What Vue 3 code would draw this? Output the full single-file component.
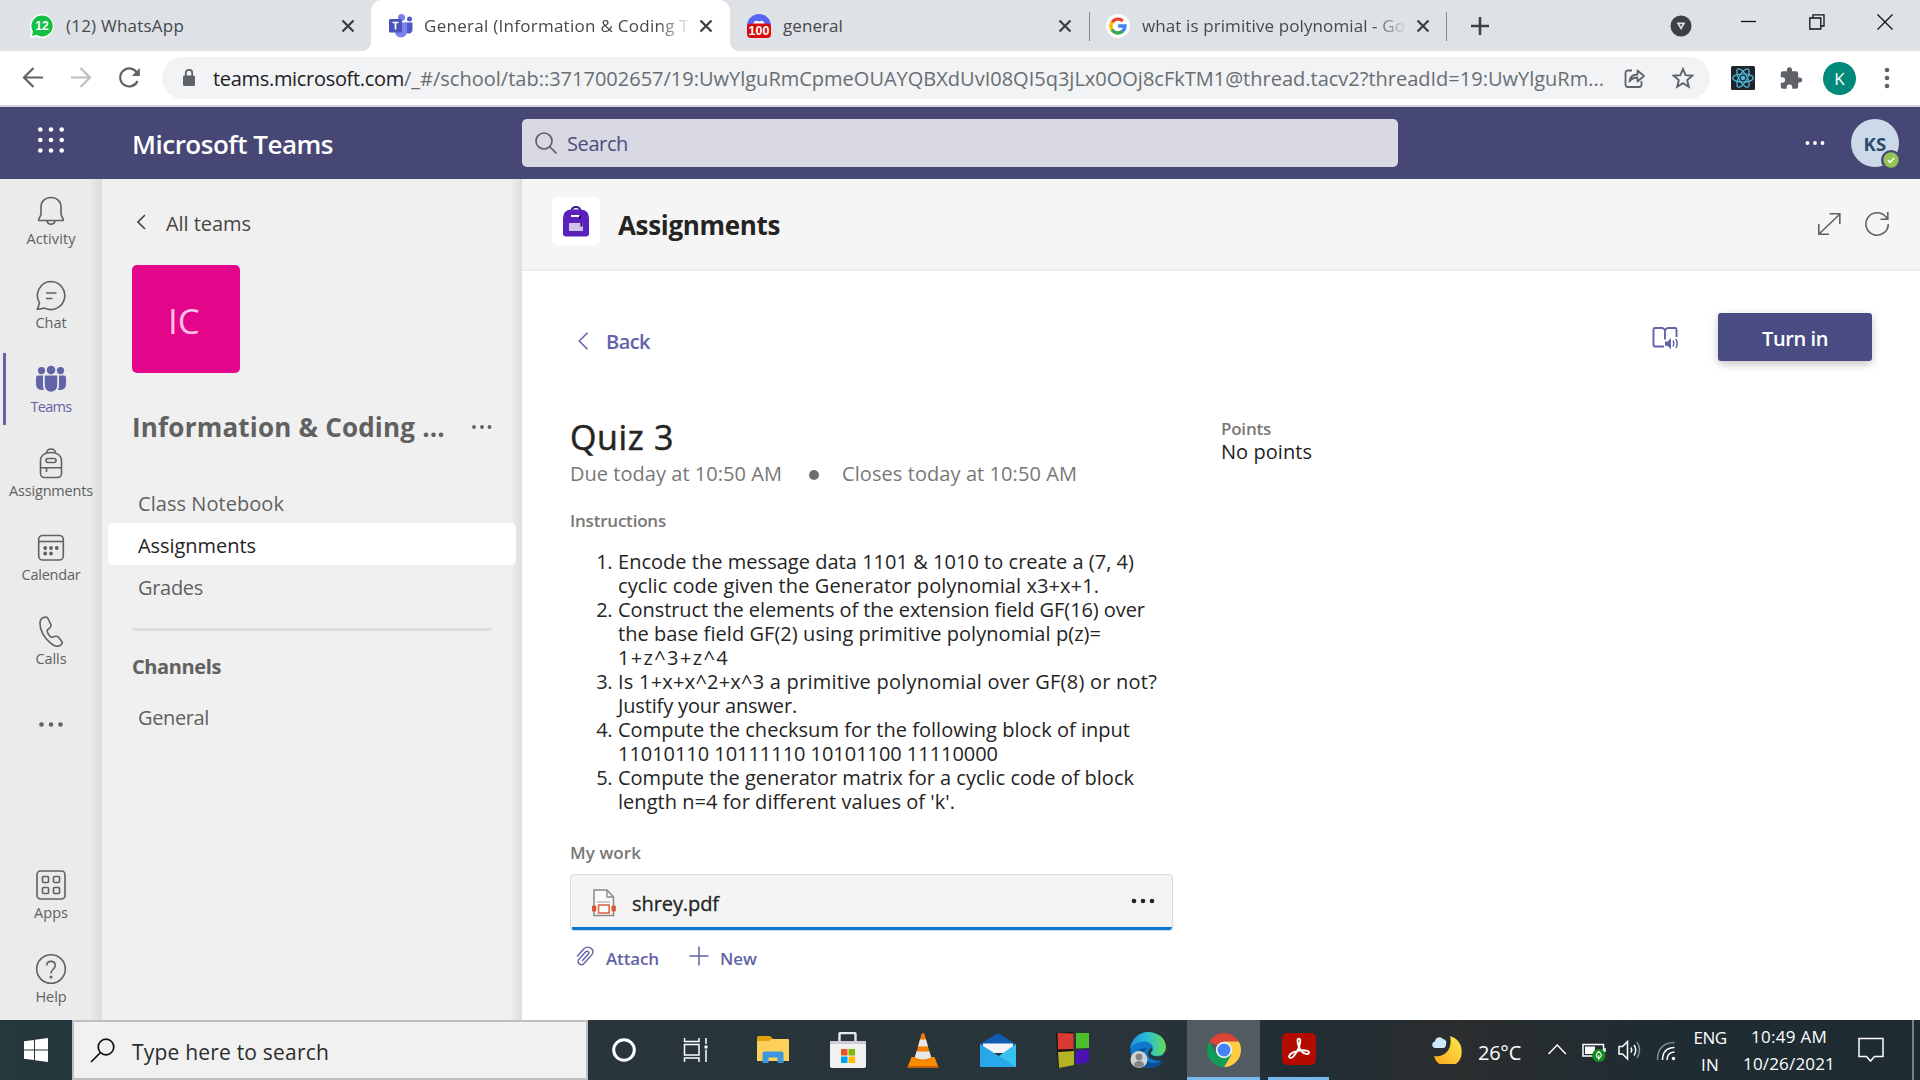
<script setup>
const vFit = {
  mounted(el, { value }) {
    const n = el.textContent.length
    const natural = el.getBoundingClientRect().width
    el.style.letterSpacing = `${((value - natural) / n).toFixed(3)}px`
  },
}

const navItems = [
  { id: 'bell', label: 'Activity', w: 49 },
  { id: 'chat', label: 'Chat', w: 31 },
  { id: 'teams', label: 'Teams', w: 41, active: true },
  { id: 'bag', label: 'Assignments', w: 84 },
  { id: 'calendar', label: 'Calendar', w: 59 },
  { id: 'calls', label: 'Calls', w: 31 },
]

const sideLinks = [
  { label: 'Class Notebook', w: 146 },
  { label: 'Assignments', w: 118, active: true },
  { label: 'Grades', w: 65 },
]

const instructions = [
  [
    ['Encode the message data 1101 & 1010 to create a (7, 4)', 516],
    ['cyclic code given the Generator polynomial x3+x+1.', 481],
  ],
  [
    ['Construct the elements of the extension field GF(16) over', 527],
    ['the base field GF(2) using primitive polynomial p(z)=', 483],
    ['1+z^3+z^4', 111],
  ],
  [
    ['Is 1+x+x^2+x^3 a primitive polynomial over GF(8) or not?', 539],
    ['Justify your answer.', 179],
  ],
  [
    ['Compute the checksum for the following block of input', 512],
    ['11010110 10111110 10101100 11110000', 380],
  ],
  [
    ['Compute the generator matrix for a cyclic code of block', 516],
    ["length n=4 for different values of 'k'.", 337],
  ],
]
</script>

<template>
  <div class="screen">
    <!-- Browser tabs -->
    <div class="tabs">
      <div class="tab tab-whatsapp">
        <svg class="fav" width="24" height="24" viewBox="0 0 24 24">
          <path d="M12 0a12 12 0 0 0-11 17L0 24l7-1A12 12 0 1 0 12 0z" fill="#fff" />
          <path d="M12 1.5A10.5 10.5 0 0 0 3 17.500L2 22l4.500-1.200A10.500 10.500 0 1 0 12 1.500z" fill="#12c143" />
          <text x="12" y="16" text-anchor="middle" class="badge-num">12</text>
        </svg>
        <span v-fit="118" class="tab-title">(12) WhatsApp</span>
        <svg class="close" width="14" height="14" viewBox="0 0 14 14"><path d="M1.500 1.500l11 11M12.500 1.500l-11 11" /></svg>
      </div>
      <div class="tab tab-teams">
        <svg class="fav" width="26" height="24" viewBox="0 0 26 24">
          <circle cx="13.500" cy="3.500" r="3.500" fill="#7b83eb" />
          <circle cx="21.500" cy="5" r="2.500" fill="#5059c9" />
          <path d="M17 8.500h7.500v7a4 4 0 0 1-7.500 2z" fill="#5059c9" />
          <path d="M7 8.500h12v9a6 6 0 0 1-12 0z" fill="#7b83eb" />
          <rect x="1" y="5" width="13" height="13.500" rx="1.200" fill="#4b53bc" />
          <path d="M4.500 8.500h6M7.500 8.500v7" stroke="#fff" stroke-width="1.700" />
        </svg>
        <span v-fit="265" class="tab-title fade">General (Information &amp; Coding T</span>
        <svg class="close" width="14" height="14" viewBox="0 0 14 14"><path d="M1.500 1.500l11 11M12.500 1.500l-11 11" /></svg>
      </div>
      <div class="tab tab-general">
        <svg class="fav" width="24" height="24" viewBox="0 0 24 24">
          <circle cx="12" cy="12" r="12" fill="#5865f2" />
          <path d="M6 10q2-4 4-3l2 .6 2-.6q2-1 4 3z" fill="#fff" />
          <rect x="0" y="9.500" width="24" height="14.500" rx="4" fill="#d90b0b" />
          <text x="12" y="21.300" text-anchor="middle" class="badge-num wide">100</text>
        </svg>
        <span v-fit="60" class="tab-title">general</span>
        <svg class="close" width="14" height="14" viewBox="0 0 14 14"><path d="M1.500 1.500l11 11M12.500 1.500l-11 11" /></svg>
      </div>
      <div class="tab tab-google">
        <svg class="fav" width="24" height="24" viewBox="0 0 24 24">
          <circle cx="12" cy="12" r="12" fill="#fff" />
          <g fill="none" stroke-width="3.400">
            <path d="M6.200 8.200a7 7 0 0 1 10.600-1.200" stroke="#ea4335" />
            <path d="M6.200 8a7.200 7.200 0 0 0 0 8" stroke="#fbbc05" />
            <path d="M6 15.700a7 7 0 0 0 10.800 1.400" stroke="#34a853" />
            <path d="M12.200 12h6.800a7 7 0 0 1-2.400 5.300" stroke="#4285f4" />
          </g>
        </svg>
        <span v-fit="263" class="tab-title fade">what is primitive polynomial - Go</span>
        <svg class="close" width="14" height="14" viewBox="0 0 14 14"><path d="M1.500 1.500l11 11M12.500 1.500l-11 11" /></svg>
      </div>
      <svg class="plus" width="18" height="18" viewBox="0 0 18 18"><path d="M9 0v18M0 9h18" stroke="#3c4043" stroke-width="2.600" /></svg>
      <svg class="media" width="22" height="22" viewBox="0 0 22 22">
        <circle cx="11" cy="11" r="10.500" fill="#3c4043" />
        <path d="M6.500 7.500h9l-4.500 7.500z" fill="#dee1e6" />
        <path d="M9.500 9.300h3l-1.500 2.400z" fill="#3c4043" />
      </svg>
      <div class="win">
        <svg width="16" height="16" viewBox="0 0 16 16"><path d="M0 7.500h15" /></svg>
        <svg width="16" height="16" viewBox="0 0 16 16"><path d="M.8 4h11v11h-11zM4 4V.8h11V12h-3" /></svg>
        <svg width="16" height="16" viewBox="0 0 16 16"><path d="M.5 .5l15 15M15.500 .5l-15 15" /></svg>
      </div>
    </div>

    <!-- Address bar -->
    <div class="toolbar">
      <svg class="nav-ic" width="120" height="24" viewBox="22 66 120 24" fill="none" stroke="#5f6368" stroke-width="2.200">
        <path d="M43 77.500H24.500M33.500 68l-9.500 9.500 9.500 9.500" />
        <path d="M71 77.500h18.500M80.500 68l9.500 9.500-9.500 9.500" stroke="#bcbfc2" />
        <path d="M137.300 73.500A9 9 0 1 0 137.500 81" />
        <path d="M139.800 68v8h-8z" fill="#5f6368" stroke="none" />
      </svg>
      <div class="url">
        <svg width="12" height="18" viewBox="0 0 12 18">
          <rect x="0" y="6.500" width="12" height="10.500" rx="1.500" fill="#5f6368" />
          <path d="M2.800 7V4a3.200 3.200 0 0 1 6.400 0v3" fill="none" stroke="#5f6368" stroke-width="1.800" />
        </svg>
        <span class="url-text"><span v-fit="191" class="host">teams.microsoft.com</span><span v-fit="1200" class="path">/_#/school/tab::3717002657/19:UwYlguRmCpmeOUAYQBXdUvI08QI5q3jLx0OOj8cFkTM1@thread.tacv2?threadId=19:UwYlguRm...</span></span>
        <svg class="share" width="22" height="20" viewBox="0 0 22 20" fill="none" stroke="#5f6368" stroke-width="1.800">
          <path d="M8 2.500H4a2.500 2.500 0 0 0-2.500 2.500v11.500A2.500 2.500 0 0 0 4 19h11a2.500 2.500 0 0 0 2.500-2.500V13" />
          <path d="M5.500 13.500c.5-5 3.500-7 8-7V2.500l6.500 5.500-6.500 5.500v-4c-4 0-6 1-8 4z" stroke-linejoin="round" />
        </svg>
        <svg class="star" width="22" height="22" viewBox="0 0 22 22"><path d="M11 2l2.600 6.200 6.700.5-5.100 4.400 1.600 6.600L11 16.100l-5.800 3.600 1.600-6.600L1.700 8.700l6.700-.5z" fill="none" stroke="#5f6368" stroke-width="1.900" /></svg>
      </div>
      <svg class="react" width="24" height="24" viewBox="0 0 24 24">
        <rect width="24" height="24" rx="1.500" fill="#20232a" />
        <g fill="none" stroke="#4fbfe0" stroke-width="1.200">
          <ellipse cx="12" cy="12" rx="10.300" ry="4" />
          <ellipse cx="12" cy="12" rx="10.300" ry="4" transform="rotate(60 12 12)" />
          <ellipse cx="12" cy="12" rx="10.300" ry="4" transform="rotate(120 12 12)" />
        </g>
        <circle cx="12" cy="12" r="2.200" fill="#4fbfe0" />
      </svg>
      <svg class="puzzle" width="22" height="22" viewBox="1.500 .8 21 21.500"><path fill="#5f6368" d="M20.500 11H19V7a2 2 0 0 0-2-2h-4V3.500a2.500 2.500 0 0 0-5 0V5H4a2 2 0 0 0-2 2v3.800h1.500a2.700 2.700 0 0 1 0 5.400H2V20a2 2 0 0 0 2 2h3.800v-1.500a2.700 2.700 0 0 1 5.400 0V22H17a2 2 0 0 0 2-2v-4h1.500a2.500 2.500 0 0 0 0-5z" /></svg>
      <span class="profile">K</span>
      <svg class="menu" width="6" height="22" viewBox="0 0 6 22" fill="#5f6368"><circle cx="3" cy="3" r="2.300" /><circle cx="3" cy="11" r="2.300" /><circle cx="3" cy="19" r="2.300" /></svg>
    </div>

    <!-- Teams header -->
    <header class="top">
      <svg class="waffle" width="28" height="28" viewBox="0 0 28 28" fill="#fff">
        <g v-for="y in 3" :key="y"><circle v-for="x in 3" :key="x" :cx="x * 10.700 - 7.400" :cy="y * 10.500 - 7" r="2.300" /></g>
      </svg>
      <span v-fit="201" class="brand">Microsoft Teams</span>
      <div class="search">
        <svg width="22" height="22" viewBox="0 0 22 22" fill="none" stroke="#616161" stroke-width="1.700"><circle cx="9" cy="9" r="8" /><path d="M14.500 14.500l7 7" /></svg>
        <span v-fit="61">Search</span>
      </div>
      <svg class="top-dots" width="20" height="6" viewBox="0 0 20 6" fill="#fff"><circle cx="2.500" cy="3" r="1.900" /><circle cx="10" cy="3" r="1.900" /><circle cx="17.500" cy="3" r="1.900" /></svg>
      <div class="avatar">
        <span v-fit="23">KS</span>
        <svg class="presence" width="20" height="20" viewBox="0 0 20 20">
          <circle cx="10" cy="10" r="10" fill="#464775" /><circle cx="10" cy="10" r="7.700" fill="#92c353" />
          <path d="M6.800 10.200l2.200 2.200 4.200-4.400" fill="none" stroke="#fff" stroke-width="1.600" />
        </svg>
      </div>
    </header>

    <div class="app">
      <!-- App rail -->
      <nav class="rail">
        <div v-for="n in navItems" :key="n.id" class="rail-item" :class="{ active: n.active }">
          <svg class="rail-ic" width="32" height="32" viewBox="0 0 32 32">
            <g v-if="n.id === 'bell'"><path d="M16 2.500c-6 0-10 4-10 9.500v7.500l-2.300 4.800q-.5 1.200.8 1.200h23q1.300 0 .8-1.200L26 19.500V12c0-5.500-4-9.500-10-9.500z" /><path d="M12 26a4.100 4.100 0 0 0 8 0" /></g>
            <g v-else-if="n.id === 'chat'"><path d="M16 2.500a14 14 0 1 1-6.300 26.600L2.500 30.200l2-6.400A14 14 0 0 1 16 2.500z" /><path d="M11 14h10.500M11 19.500h6.500" /></g>
            <g v-else-if="n.id === 'teams'" class="solid">
              <circle cx="16" cy="7" r="4.300" /><circle cx="6.500" cy="7.600" r="3.600" /><circle cx="25.500" cy="7.600" r="3.600" />
              <path d="M9.800 12.500h12.400v10a6.200 6.200 0 0 1-12.400 0z" />
              <path d="M3 12.500h5v10.500q.1 2.200 1 4-7.800.5-8-5.500v-7q.2-2 2-2zM29 12.500h-5v10.500q-.1 2.200-1 4 7.800.5 8-5.500v-7q-.2-2-2-2z" />
            </g>
            <g v-else-if="n.id === 'bag'"><path d="M5.500 14C5.500 8.500 10 5.500 16 5.500s10.500 3 10.500 8.500v12.500a4 4 0 0 1-4 4h-13a4 4 0 0 1-4-4zM5.500 20.800h21M11.500 21v4" /><path d="M11.500 6q.5-4 4.500-4t4.500 4" /><rect x="11" y="11.500" width="10" height="4" rx="2" /></g>
            <g v-else-if="n.id === 'calendar'"><rect x="3.700" y="4.500" width="24.600" height="24.500" rx="4" /><path d="M4 10.500h24" /><g class="solid"><circle cx="10.200" cy="17" r="1.900" /><circle cx="16" cy="17" r="1.900" /><circle cx="21.800" cy="17" r="1.900" /><circle cx="10.200" cy="22.500" r="1.900" /><circle cx="16" cy="22.500" r="1.900" /></g></g>
            <g v-else><path d="M7.500 3q4.300-2 5.500.5l2.800 6q.8 2-1.600 3.800l-1.700 1.500q-.7 1 .2 3 1 2.300 2.700 3.800 1.200 1 2.500.5l2.600-.8q2-.5 3.300 1.200l3 3.900q1.300 2-1.300 3.800-4.500 2.800-10-2C8.600 22 5 15 5 8.500Q5 4.200 7.500 3z" /></g>
          </svg>
          <span v-fit="n.w">{{ n.label }}</span>
        </div>
        <div class="rail-item more"><svg class="rail-ic" width="32" height="32" viewBox="0 0 32 32"><g class="solid"><circle cx="6.500" cy="16.500" r="2.300" /><circle cx="16" cy="16.500" r="2.300" /><circle cx="25.500" cy="16.500" r="2.300" /></g></svg></div>
        <div class="rail-item push">
          <svg class="rail-ic" width="32" height="32" viewBox="0 0 32 32"><rect x="2" y="2" width="28" height="28" rx="3.500" /><rect x="7.500" y="7.500" width="6" height="6" rx="1" /><rect x="18.500" y="7.500" width="6" height="6" rx="1" /><rect x="7.500" y="18.500" width="6" height="6" rx="1" /><rect x="18.500" y="18.500" width="6" height="6" rx="1" /></svg>
          <span v-fit="34">Apps</span>
        </div>
        <div class="rail-item">
          <svg class="rail-ic" width="32" height="32" viewBox="0 0 32 32"><circle cx="16" cy="16" r="14.300" /><path d="M11.800 12.500c0-5.500 8.400-5.500 8.400 0 0 4-4.200 3.500-4.200 8" /><circle cx="16" cy="24" r="1.500" class="solid" /></svg>
          <span v-fit="31">Help</span>
        </div>
      </nav>

      <!-- Team panel -->
      <aside class="side">
        <div class="all-teams">
          <svg width="9" height="16" viewBox="0 0 9 16"><path d="M8 1L1 8l7 7" fill="none" stroke="#484644" stroke-width="1.600" /></svg>
          <span v-fit="85">All teams</span>
        </div>
        <div class="team-tile"><span v-fit="32">IC</span></div>
        <div class="team-name">
          <span v-fit="313">Information &amp; Coding ...</span>
          <svg width="20" height="6" viewBox="0 0 20 6" fill="#616161"><circle cx="2" cy="3" r="1.900" /><circle cx="10" cy="3" r="1.900" /><circle cx="17.500" cy="3" r="1.900" /></svg>
        </div>
        <ul class="links">
          <li v-for="l in sideLinks" :key="l.label" :class="{ active: l.active }"><span v-fit="l.w">{{ l.label }}</span></li>
        </ul>
        <div class="divider"></div>
        <div class="channels"><span v-fit="89">Channels</span></div>
        <div class="channel"><span v-fit="71">General</span></div>
      </aside>

      <!-- Assignment -->
      <main class="main">
        <div class="title-bar">
          <span class="app-tile">
            <svg width="26" height="31" viewBox="0 0 26 31">
              <path d="M8.500 5q.5-4 4.500-4t4.500 4" fill="none" stroke="#3b1a7a" stroke-width="2" />
              <path d="M0 12q0-8 8-8.500h10q8 .5 8 8.500v15.500a3 3 0 0 1-3 3H3a3 3 0 0 1-3-3z" fill="#5b21bd" />
              <path d="M8 10h9" stroke="#fff" stroke-width="2" /><path d="M17 9.500v3.500" stroke="#1f0e44" stroke-width="2" />
              <rect x="6" y="17" width="14" height="8" fill="#cfc0ea" /><path d="M18.500 17v3.500" stroke="#1f0e44" stroke-width="2" />
            </svg>
          </span>
          <h1 v-fit="162">Assignments</h1>
          <svg class="tools" width="72" height="26" viewBox="1818 211 72 26" fill="none" stroke="#616161" stroke-width="1.600">
            <path d="M1820 234l21-20M1830.500 213.700h10.300v10.300M1819.800 224v10.300h10.300" />
            <path d="M1889.300 224a11.200 11.200 0 1 1-2.600-7.200l1.800 2M1888.800 212v7.300h-7.300" />
          </svg>
        </div>

        <div class="actions">
          <div class="back">
            <svg width="11" height="18" viewBox="0 0 11 18"><path d="M9.500 .8L1.300 9l8.200 8.200" fill="none" stroke="#6264a7" stroke-width="1.600" /></svg>
            <span v-fit="44">Back</span>
          </div>
          <svg class="reader" width="27" height="24" viewBox="0 0 27 24" fill="none" stroke="#6264a7" stroke-width="1.900">
            <path d="M12 20.500H3A1.500 1.500 0 0 1 1.500 19V3.500A1.500 1.500 0 0 1 3 2h7.500l2.500 1.800L15.500 2H23a1.500 1.500 0 0 1 1.500 1.500V11M13 4v9.500" />
            <path d="M13 15.500h2.500l3.500-3.500v11.200l-3.500-3.500H13z" fill="#6264a7" stroke="none" />
            <path d="M21 14.500q1.500 3 0 6M24 13q2.300 4.500 0 9" stroke-width="1.500" />
          </svg>
          <button class="turn-in"><span v-fit="66">Turn in</span></button>
        </div>

        <div class="columns">
          <section class="left">
            <h2><span v-fit="104">Quiz 3</span></h2>
            <div class="due"><span v-fit="212">Due today at 10:50 AM</span><i class="dot"></i><span v-fit="235">Closes today at 10:50 AM</span></div>
            <div class="label instr"><span v-fit="96">Instructions</span></div>
            <ol>
              <li v-for="(item, i) in instructions" :key="i">
                <span class="num">{{ i + 1 }}.</span>
                <div class="lines"><div v-for="[text, w] in item" :key="text"><span v-fit="w">{{ text }}</span></div></div>
              </li>
            </ol>
            <div class="label work"><span v-fit="71">My work</span></div>
            <div class="file">
              <svg width="24" height="28" viewBox="0 0 24 28">
                <path d="M2 1h13l6.500 7v18.500H2z" fill="#fafafa" stroke="#8a8886" stroke-width="1.500" />
                <path d="M15 1v7h6.500" fill="none" stroke="#8a8886" stroke-width="1.300" />
                <path d="M5 13h13.500" stroke="#b5b3b1" stroke-width="1.300" />
                <rect x="0" y="16.500" width="4.300" height="6" rx="1" fill="#d65532" /><rect x="19.500" y="16.500" width="4.300" height="6" rx="1" fill="#d65532" />
                <rect x="6.600" y="16" width="10.500" height="8" fill="#fff" stroke="#e07050" stroke-width="1.700" />
              </svg>
              <span v-fit="87" class="file-name">shrey.pdf</span>
              <svg class="file-dots" width="24" height="6" viewBox="0 0 24 6" fill="#252423"><circle cx="3" cy="3" r="2.300" /><circle cx="12" cy="3" r="2.300" /><circle cx="21" cy="3" r="2.300" /></svg>
            </div>
            <div class="add">
              <svg width="18" height="20" viewBox="0 0 18 20" fill="none" stroke="#6264a7" stroke-width="1.400"><path d="M1 10.500L8 2.700c3.500-3.600 9-.2 9 3 0 1.300-.5 2.200-1.300 3.200L8 17.500c-2.500 2.800-6 .2-6-2 0-1 .5-1.800 1.200-2.500L9.500 6c1.800-1.800 4 0 3 1.800L6 15" /></svg>
              <span v-fit="53" class="attach">Attach</span>
              <svg class="add-plus" width="20" height="20" viewBox="0 0 20 20" stroke="#6264a7" stroke-width="1.500"><path d="M10 .5v19M.5 10h19" /></svg>
              <span v-fit="37" class="new">New</span>
            </div>
          </section>
          <section class="right">
            <div class="label"><span v-fit="50">Points</span></div>
            <div class="points"><span v-fit="91">No points</span></div>
          </section>
        </div>
      </main>
    </div>

    <!-- Windows taskbar -->
    <footer class="taskbar">
      <div class="start"><svg width="24" height="24" viewBox="0 0 24 24" fill="#fff"><path d="M0 3.300L10 2v9.500H0zM11 1.800L24 0v11.500H11zM0 12.500h10V22L0 20.700zM11 12.500h13V24l-13-1.800z" /></svg></div>
      <div class="tsearch">
        <svg width="25" height="25" viewBox="0 0 25 25" fill="none" stroke="#111" stroke-width="1.700"><circle cx="16" cy="9" r="7.800" /><path d="M10.500 14.500L1 24" /></svg>
        <span v-fit="197">Type here to search</span>
      </div>
      <div class="task"><svg width="26" height="26" viewBox="0 0 26 26"><circle cx="13" cy="13" r="10.300" fill="none" stroke="#fff" stroke-width="3" /></svg></div>
      <div class="task"><svg width="26" height="24" viewBox="0 0 26 24" fill="none" stroke="#fff" stroke-width="1.500"><path d="M1.500 0v3.500H16V0M1.500 24v-4H16v4M1.500 6.500H16v10.500H1.500zM23 0v6M23 11.500V24" /><path d="M21.500 7.500h3v3h-3z" fill="#fff" stroke="none" /></svg></div>
      <div class="task folder"><svg width="32" height="28" viewBox="0 0 32 28"><path d="M0 1.500Q0 0 1.500 0H13l3 3-3 3H0z" fill="#e3a008" /><path d="M0 5h12l2.500-2H31q1 0 1 1v21H0z" fill="#fdd05c" /><path d="M5.500 27V17.500q0-2 2-2h17q2 0 2 2V27h-6v-5.500h-9V27z" fill="#3e97dd" /></svg></div>
      <div class="task"><svg width="36" height="36" viewBox="0 0 36 36"><path d="M9.500 12V2q0-1 1-1h14q1 0 1 1v10" fill="none" stroke="#e9e9e9" stroke-width="2.400" /><path d="M0 9h36v25q0 2-2 2H2q-2 0-2-2z" fill="#f1f1f1" /><path d="M0 9h36v3H0z" fill="#cfcbd0" /><path fill="#f25022" d="M11 17h6.500v6.500H11z" /><path fill="#7fba00" d="M18.500 17H25v6.500h-6.500z" /><path fill="#00a4ef" d="M11 24.500h6.500V31H11z" /><path fill="#ffb900" d="M18.500 24.500H25V31h-6.500z" /></svg></div>
      <div class="task"><svg width="32" height="35" viewBox="0 0 32 35"><path d="M4.500 24h23l4 10.500H.5z" fill="#fb8c00" /><path d="M14.500 1q1.500-2 3 0l7 25q-8.500 5-17 0z" fill="#f57c00" /><path d="M13 6.500h6l2 7H11zM9.500 18.500h13l1.700 6q-8.200 4-16.400 0z" fill="#e6e6e6" /><path d="M.5 33h31v1.500H.5z" fill="#d45f00" /></svg></div>
      <div class="task"><svg width="36" height="34" viewBox="0 0 36 34"><path d="M0 11L18 0l18 11v3H0z" fill="#0f5cb0" /><path d="M3 10.500h30V20H3z" fill="#f5f5f5" /><path d="M0 11l18 12.500L36 11v23H0z" fill="#35c1f1" /><path d="M0 11l36 23H0z" fill="#28a8ea" /></svg></div>
      <div class="task"><svg width="34" height="36" viewBox="0 0 34 36"><path d="M0 1l17-1v33L2 36z" fill="#111" /><path d="M1.500 1l16 .5V17L2 17.500z" fill="#d93a34" /><path d="M20 1h13v15l-13 .5z" fill="#4cc02c" /><path d="M2 20l16-1v14L3 36z" fill="#b5b226" /><path d="M20 18.500l13-1V30l-13 2.500z" fill="#4a12b5" /></svg></div>
      <div class="task"><svg width="36" height="36" viewBox="0 0 36 36">
        <defs><linearGradient id="edge-top" x1="0" x2="1"><stop offset="0" stop-color="#1b8fe0" /><stop offset=".5" stop-color="#2bbfd5" /><stop offset="1" stop-color="#66dc52" /></linearGradient></defs>
        <circle cx="17" cy="19" r="16.500" fill="#0d78cc" />
        <path d="M17 16q-6 5-2 11 5 7 18 2-4 7-12 7-13-1-15-12 1-8 11-8z" fill="#0c4f93" />
        <path d="M0 17C1 7 9 0 18 0c10 0 18 6.500 18 15 0 7-6 9-10 9-3 0-5-1-5-2.500s2-2 2-5c0-4-4-7-9-7-6 0-11 3-14 7.500z" fill="url(#edge-top)" />
        <path d="M22 15.500c1 3-2 4-1 6.500 1 2.300 6 3.500 13 1.500l-1.500 4.500q-7 2-13-2-3.500-6 .5-9z" fill="#26353b" />
        <circle cx="9" cy="27.500" r="8.500" fill="#d2d2d2" /><circle cx="9" cy="25" r="3.400" fill="#858585" /><path d="M4 33.500q0-4.500 5-4.500t5 4.500q-5 4-10 0z" fill="#858585" />
      </svg></div>
      <div class="task open current"><svg width="34" height="34" viewBox="0 0 34 34">
        <path d="M17 17L2.300 8.500A17 17 0 0 1 31.700 8.500H17z" fill="#db4437" />
        <path d="M17 17v-8.500h14.700A17 17 0 0 1 17 34l7.400-12.700z" fill="#ffcd40" />
        <path d="M2.300 8.500A17 17 0 0 0 17 34l7.400-12.800-14.800 0z" fill="#0f9d58" />
        <circle cx="17" cy="17" r="8.200" fill="#f1f1f1" /><circle cx="17" cy="17" r="6.500" fill="#4285f4" />
      </svg></div>
      <div class="task open adobe"><svg width="34" height="32" viewBox="0 0 34 32"><rect width="34" height="32" rx="5" fill="#b30b00" /><path d="M15.500 7.500c0-2.500 3-2.500 2.800.3-.3 4.500-3 11-6.500 15.200-2.500 3-5.500 2-4.500-.3 1.500-3.300 8.700-5.500 13.700-5.500 3.500 0 6.500 1 6 2.800-.6 2-4.600 1-7.300-1.500-2.500-2.500-4.200-8-4.200-11z" fill="none" stroke="#fff" stroke-width="1.900" /></svg></div>

      <div class="tray">
        <svg class="moon" width="30" height="28" viewBox="0 0 30 28">
          <defs><linearGradient id="moon-fill" x1="1" y1="0" x2="0" y2="1"><stop offset="0" stop-color="#ffe94e" /><stop offset="1" stop-color="#f7a416" /></linearGradient></defs>
          <path d="M18 0c7 2 12 8 11.500 15A14 13.500 0 0 1 2 20c11 2 19-7 16-20z" fill="url(#moon-fill)" />
          <path d="M3 12a3.300 3.300 0 0 1 0-6.500 4.500 4.500 0 0 1 8-2.500 3.500 3.500 0 0 1 3 5q0 4-3 4z" fill="#cfe8fa" />
        </svg>
        <span v-fit="43" class="temp">26°C</span>
        <svg class="status" width="130" height="26" viewBox="1546 1038 130 26" fill="none" stroke="#fff" stroke-width="1.500">
          <path d="M1547.500 1054l8.700-9 8.700 9" />
          <rect x="1582" y="1044.500" width="20.500" height="11.500" /><rect x="1584" y="1046.500" width="10" height="7.500" fill="#fff" stroke="none" /><path d="M1604 1048v4" />
          <circle cx="1597.800" cy="1055.500" r="6.600" fill="#128a1e" stroke="none" /><path d="M1597.800 1060v-5M1597.800 1051.500q-5 4 0 7 5-3 0-7z" stroke-width="1.100" />
          <path d="M1618 1046.500h3.500l5-5v17.500l-5-5h-3.500z" /><path d="M1630 1047.500q1.500 2.500 0 5" /><path d="M1633 1045q3.500 5 0 10.500" /><path d="M1636 1042q5 8 0 16" stroke="#809098" />
          <path d="M1656.500 1060q0-17 17-17.500" stroke="#7e8c93" /><path d="M1661.500 1060q0-12 12-12.500M1666 1060q0-7.500 7.500-8" /><circle cx="1672.500" cy="1058.500" r="1.700" fill="#fff" stroke="none" />
        </svg>
        <div class="stack lang"><span v-fit="33">ENG</span><span v-fit="18">IN</span></div>
        <div class="stack clock"><span v-fit="76">10:49 AM</span><span v-fit="92">10/26/2021</span></div>
        <svg class="notif" width="26" height="26" viewBox="0 0 26 26"><path d="M1 1.500h24v18H16.500l-4 4.500-4-4.500H1z" fill="none" stroke="#fff" stroke-width="1.500" /></svg>
        <i class="peek"></i>
      </div>
    </footer>
  </div>
</template>

<style>
body { margin: 0; overflow: hidden; }
</style>

<style scoped>
* { box-sizing: border-box; }
.screen { width: 1920px; height: 1080px; display: flex; flex-direction: column; font-family: "Open Sans", "Noto Sans", sans-serif; font-size: 20px; color: #252423; background: #fff; white-space: nowrap; overflow: hidden; }
svg { display: block; flex: none; }
span { display: inline-block; flex: none; }
h1, h2, ol, ul { margin: 0; padding: 0; list-style: none; }

.tabs { height: 51px; background: #dee1e6; display: flex; align-items: center; font-size: 17px; color: #45494d; flex: none; }
.tab { height: 51px; display: flex; align-items: center; flex: none; position: relative; }
.tab-title { margin-left: 10px; }
.close { margin-left: auto; fill: none; stroke: #3c4043; stroke-width: 2.3; }
.tab-whatsapp { width: 371px; padding: 0 16px 0 30px; }
.tab-whatsapp .tab-title { margin-left: 12px; }
.tab-teams { width: 359px; padding: 0 17px; background: #fff; border-radius: 11px 11px 0 0; }
.tab-teams::before, .tab-teams::after { content: ""; position: absolute; bottom: 0; width: 10px; height: 10px; }
.tab-teams::before { left: -10px; background: radial-gradient(circle at 0 0, transparent 10px, #fff 10.5px); }
.tab-teams::after { right: -10px; background: radial-gradient(circle at 100% 0, transparent 10px, #fff 10.5px); }
.tab-general { width: 360px; padding: 0 18px 0 17px; }
.tab-google { width: 357px; padding: 0 17px 0 16px; }
.tab-general .tab-title, .tab-google .tab-title { margin-left: 12px; }
.tab-general::after, .tab-google::after { content: ""; position: absolute; right: 0; top: 12px; height: 29px; width: 1.5px; background: #85898e; }
.fade { -webkit-mask-image: linear-gradient(90deg, #000 88%, transparent 101%); mask-image: linear-gradient(90deg, #000 88%, transparent 101%); }
.badge-num { font: 700 12px "Liberation Sans", sans-serif; fill: #fff; }
.badge-num.wide { font-size: 12.5px; }
.plus { margin-left: 24px; }
.media { margin-left: 181px; }
.win { margin-left: 49px; margin-bottom: 8px; display: flex; gap: 52px; fill: none; stroke: #111; stroke-width: 1.3; }

.toolbar { height: 56px; border-bottom: 2px solid #d4d5d9; display: flex; align-items: center; flex: none; }
.nav-ic { margin-left: 22px; }
.url { width: 1548px; height: 42px; margin-left: 20px; padding-left: 21px; border-radius: 21px; background: #f1f3f4; display: flex; align-items: center; }
.url-text { margin-left: 18px; width: 1391px; }
.host { color: #202124; }
.path { color: #6a6e72; }
.share { margin-left: 20px; }
.star { margin-left: 26px; }
.react { margin-left: 21px; }
.puzzle { margin-left: 25px; }
.profile { margin-left: 21px; width: 33px; height: 33px; border-radius: 50%; background: #00897b; color: #fff; font-size: 17px; line-height: 33px; text-align: center; }
.menu { margin-left: 28px; }

.top { height: 72px; background: #464775; display: flex; align-items: center; flex: none; }
.waffle { margin: 0 0 6px 37px; }
.brand { margin-left: 67px; color: #fff; font-size: 26px; font-weight: 600; padding-top: 1px; }
.search { position: relative; margin-left: 189px; width: 876px; height: 48px; border-radius: 5px; background: #d9d9e3; display: flex; align-items: center; padding-left: 13px; gap: 10px; color: #4b4c80; }
.top-dots { margin-left: 407px; }
.avatar { position: relative; margin-left: 26px; width: 48px; height: 48px; border-radius: 50%; background: #ccd9e8; display: flex; align-items: center; justify-content: center; font-size: 18.5px; font-weight: 700; color: #2c4a6b; }
.presence { position: absolute; right: -2px; bottom: -3px; }

.app { flex: 1; display: flex; min-height: 0; }
.rail { width: 102px; flex: none; background: linear-gradient(90deg, #ebebeb 88%, #dcdcdc); display: flex; flex-direction: column; gap: 12px; padding: 6px 0 4px; }
.rail-item { height: 72px; flex: none; display: flex; flex-direction: column; align-items: center; padding-top: 10px; font-size: 14.5px; line-height: 18px; color: #616161; position: relative; }
.rail-item span { margin-top: 3px; }
.rail-ic { fill: none; stroke: #616161; stroke-width: 1.6; }
.rail-ic .solid { fill: #616161; stroke: none; }
.rail-item.more { padding-top: 19px; }
.push { margin-top: auto; }
.push, .push + .rail-item { padding-top: 9px; }
.rail-item.active { color: #6264a7; }
.rail-item.active .solid { fill: #6264a7; }
.rail-item.active::before { content: ""; position: absolute; left: 3px; top: 0; width: 3px; height: 72px; background: #6264a7; }

.side { width: 420px; flex: none; background: linear-gradient(90deg, #f0f0f0 97%, #dfdfdf); display: flex; flex-direction: column; padding: 29px 6px 0 30px; }
.all-teams { height: 30px; line-height: 32px; display: flex; color: #484644; gap: 20px; padding-left: 5px; }
.all-teams svg { margin-top: 6px; }
.team-tile { margin-top: 27px; width: 108px; height: 108px; border-radius: 5px; background: #e3058a; color: #fbc1e4; font-size: 35px; font-weight: 400; line-height: 112px; padding-left: 36px; }
.team-name { margin-top: 36px; height: 36px; line-height: 36px; font-size: 26px; font-weight: 700; color: #616161; display: flex; justify-content: space-between; align-items: center; padding-right: 24px; }
.links { margin: 36px 0 0 -24px; }
.links li { height: 42px; line-height: 42px; padding: 2px 0 0 30px; color: #616161; border-radius: 5px; }
.links li.active { background: #fff; color: #252423; }
.divider { margin-top: 21px; width: 360px; height: 3px; background: #dedede; }
.channels { margin-top: 21px; line-height: 30px; font-weight: 700; color: #616161; }
.channel { margin-top: 21px; line-height: 30px; padding-left: 6px; color: #616161; }

.main { flex: 1; display: flex; flex-direction: column; }
.title-bar { height: 92px; background: #f5f5f5; border-bottom: 2px solid #ebebeb; display: flex; align-items: center; padding: 0 31px 0 30px; flex: none; }
.app-tile { width: 48px; height: 48px; border-radius: 5px; background: #fff; padding: 9px 0 0 11px; margin-bottom: 6px; }
h1 { margin-left: 18px; font-size: 26px; font-weight: 700; padding-top: 1px; }
.tools { margin-left: auto; }
.actions { margin-top: 42px; height: 48px; display: flex; align-items: center; padding: 0 48px 0 56px; flex: none; }
.back { height: 48px; display: flex; align-items: center; padding-top: 7px; gap: 17px; color: #6264a7; font-weight: 600; }
.back span { padding-top: 2px; }
.reader { margin: 2px 0 0 auto; }
.turn-in { margin-left: 39px; width: 154px; height: 48px; border: 0; border-radius: 3px; background: #494b83; color: #fff; font: 600 20px "Open Sans", sans-serif; padding: 3px 0 0; box-shadow: 0 3px 8px rgba(0, 0, 0, .24); }
.columns { display: flex; margin-top: 53px; padding-left: 48px; }
.left { width: 603px; }
.right { margin-left: 48px; padding-top: 3px; }
h2 { height: 47px; font-size: 34px; line-height: 46px; font-weight: 500; -webkit-text-stroke: 0.5px #252423; }
.due { display: flex; align-items: center; line-height: 26px; height: 26px; color: #797775; }
.dot { width: 10px; height: 10px; border-radius: 50%; background: #6f6d6b; margin: 2px 23px 0 27px; }
.label { font-size: 17px; line-height: 24px; font-weight: 600; color: #797775; }
.instr { margin-top: 22px; }
ol { margin-top: 17px; line-height: 24px; }
ol li { display: flex; }
.num { width: 48px; padding-right: 6px; text-align: right; letter-spacing: -0.5px; }
.work { margin-top: 27px; }
.file { margin-top: 9px; height: 57px; border: 1px solid #d9d9d9; border-radius: 4px; background: linear-gradient(#0078d4, #0078d4) 1px 52px / 600px 3px no-repeat, #f4f4f4; display: flex; align-items: center; padding: 0 17px 0 21px; }
.file-name { margin: 1px 0 0 16px; -webkit-text-stroke: 0.3px #252423; }
.file-dots { margin: 0 0 4px auto; }
.add { margin-top: 15px; height: 24px; line-height: 26px; display: flex; font-size: 17px; font-weight: 600; color: #6264a7; padding-left: 6px; }
.attach { margin-left: 12px; }
.add-plus { margin-left: 30px; }
.new { margin-left: 11px; }
.points { line-height: 24px; margin-top: -1px; }

.taskbar { height: 60px; flex: none; display: flex; background: linear-gradient(90deg, #27373e, #28343a 60%, #212d35 68%, #2b2d2e 76%, #1f2c33 86%, #1e2b31); color: #fff; }
.start { width: 72px; padding: 18px 24px; }
.tsearch { width: 516px; height: 60px; border: 2px solid #bfbfbf; background: #f1f1f1; color: #2b2b2b; font-size: 21px; display: flex; align-items: center; gap: 17px; padding-left: 16px; }
.tsearch span { padding-top: 3px; }
.task { width: 72px; height: 60px; display: flex; align-items: center; justify-content: center; flex: none; }
.task:nth-child(n + 5) { width: 75px; }
.task.folder { margin-left: 3px; }
.task.open { border-bottom: 3px solid #76b9ed; padding-top: 2px; }
.task.open.current { width: 73px; margin-left: 2px; background: #525b61; }
.task.open.adobe { width: 61px; margin-left: 8px; padding: 0; }
.tray { flex: 1; display: flex; align-items: center; }
.moon { margin-left: 103px; }
.temp { margin-left: 16px; padding-top: 4px; }
.status { margin: 2px 0 0 26px; }
.stack { display: flex; flex-direction: column; align-items: center; font-size: 17px; line-height: 27px; }
.lang { width: 34px; margin-left: 16px; padding-top: 1px; }
.clock { width: 92px; margin-left: 16px; }
.notif { margin: 0 0 0 23px; }
.peek { width: 2px; height: 60px; background: #74808a; margin-left: auto; margin-right: 6px; }
</style>
